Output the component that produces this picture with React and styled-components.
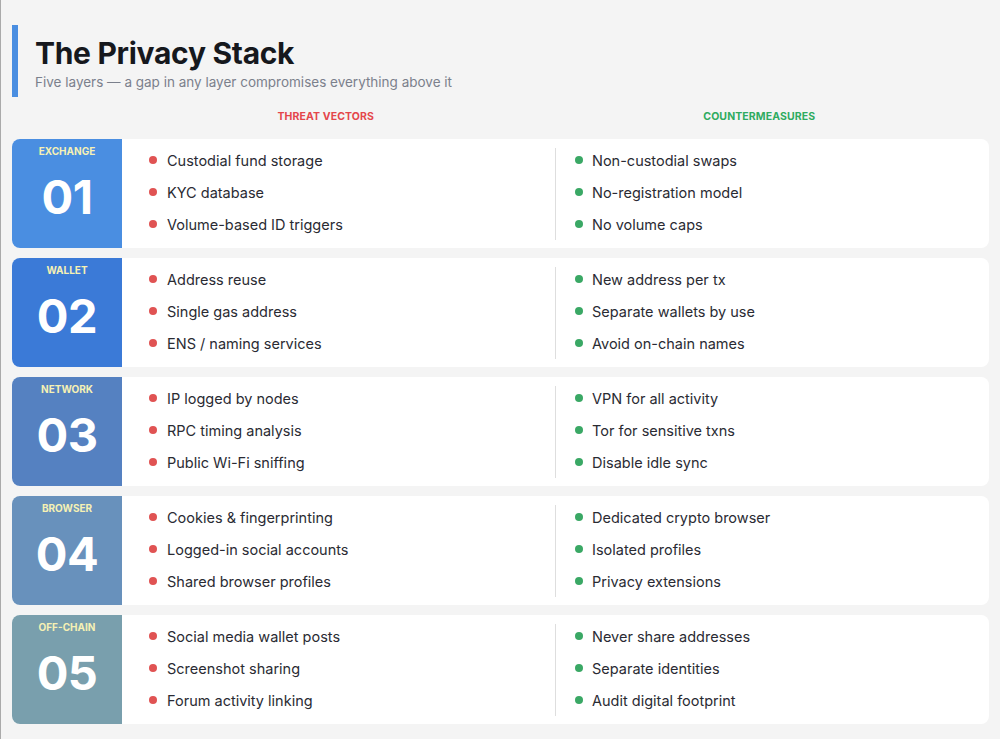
import React from "react";
import styled, { createGlobalStyle } from "styled-components";

const layers = [
  {
    label: "EXCHANGE",
    num: "01",
    color: "#4a8ee1",
    threats: ["Custodial fund storage", "KYC database", "Volume-based ID triggers"],
    counters: ["Non-custodial swaps", "No-registration model", "No volume caps"],
  },
  {
    label: "WALLET",
    num: "02",
    color: "#3b7ad7",
    threats: ["Address reuse", "Single gas address", "ENS / naming services"],
    counters: ["New address per tx", "Separate wallets by use", "Avoid on-chain names"],
  },
  {
    label: "NETWORK",
    num: "03",
    color: "#5581c1",
    threats: ["IP logged by nodes", "RPC timing analysis", "Public Wi-Fi sniffing"],
    counters: ["VPN for all activity", "Tor for sensitive txns", "Disable idle sync"],
  },
  {
    label: "BROWSER",
    num: "04",
    color: "#6891bc",
    threats: ["Cookies & fingerprinting", "Logged-in social accounts", "Shared browser profiles"],
    counters: ["Dedicated crypto browser", "Isolated profiles", "Privacy extensions"],
  },
  {
    label: "OFF-CHAIN",
    num: "05",
    color: "#799fad",
    threats: ["Social media wallet posts", "Screenshot sharing", "Forum activity linking"],
    counters: ["Never share addresses", "Separate identities", "Audit digital footprint"],
  },
];

const GlobalStyle = createGlobalStyle`
  html, body {
    margin: 0;
    background: #f4f4f4;
  }
  body {
    font-family: Inter, "Noto Sans", sans-serif;
  }
`;

const Page = styled.div`
  min-height: 739px;
  box-sizing: border-box;
  padding: 25px 11px 0 11px;
  border-left: 1px solid #aaaaaa;
  background: #f4f4f4;
`;

const Header = styled.header`
  height: 72px;
  box-sizing: border-box;
  border-left: 6px solid #4a8ee1;
  padding: 10px 0 0 17px;
`;

const Title = styled.h1`
  margin: 0;
  font-size: 30px;
  line-height: 36px;
  font-weight: 700;
  color: #16181d;
  letter-spacing: -0.3px;
`;

const Subtitle = styled.p`
  margin: 2px 0 0;
  font-size: 13.5px;
  line-height: 18px;
  color: #7b808c;
`;

const ColumnHeads = styled.div`
  display: grid;
  grid-template-columns: 1fr 1fr;
  margin: 11px 13px 15px 97px;
  height: 16px;
  align-items: center;
`;

const ColumnHead = styled.div`
  text-align: center;
  font-size: 10.5px;
  font-weight: 700;
  letter-spacing: 0.1px;
  color: ${(p) => p.$color};
`;

const Stack = styled.div`
  display: flex;
  flex-direction: column;
  gap: 10px;
`;

const Card = styled.div`
  display: grid;
  grid-template-columns: 110px 1fr 1px 1fr;
  height: 109px;
  background: #ffffff;
  border-radius: 8px;
`;

const Badge = styled.div`
  display: flex;
  flex-direction: column;
  align-items: center;
  padding-top: 6px;
  background: ${(p) => p.$color};
  border-radius: 8px 0 0 8px;
`;

const BadgeLabel = styled.div`
  font-size: 10px;
  line-height: 12px;
  font-weight: 700;
  color: #f6f1b4;
`;

const BadgeNum = styled.div`
  margin-top: 17px;
  font-size: 47px;
  line-height: 46px;
  font-weight: 700;
  color: #ffffff;
  letter-spacing: -0.5px;
`;

const List = styled.ul`
  list-style: none;
  margin: 0;
  padding: 5px 0 0 ${(p) => p.$indent}px;
`;

const Item = styled.li`
  display: flex;
  align-items: center;
  gap: ${(p) => p.$gap}px;
  height: 32px;
  font-size: 14.5px;
  color: #2a2b33;
`;

const Dot = styled.span`
  width: 8px;
  height: 8px;
  border-radius: 50%;
  flex-shrink: 0;
  background: ${(p) => p.$color};
`;

const Divider = styled.div`
  align-self: center;
  height: 92px;
  background: #dedede;
`;

const RED = "#e05353";
const GREEN = "#3aa865";

export default function App() {
  return (
    <>
      <GlobalStyle />
      <Page>
        <Header>
          <Title>The Privacy Stack</Title>
          <Subtitle>Five layers — a gap in any layer compromises everything above it</Subtitle>
        </Header>
        <ColumnHeads>
          <ColumnHead $color="#e4464b">THREAT VECTORS</ColumnHead>
          <ColumnHead $color="#2fab5f">COUNTERMEASURES</ColumnHead>
        </ColumnHeads>
        <Stack>
          {layers.map((layer) => (
            <Card key={layer.num}>
              <Badge $color={layer.color}>
                <BadgeLabel>{layer.label}</BadgeLabel>
                <BadgeNum>{layer.num}</BadgeNum>
              </Badge>
              <List $indent={27}>
                {layer.threats.map((t) => (
                  <Item key={t} $gap={10}>
                    <Dot $color={RED} />
                    {t}
                  </Item>
                ))}
              </List>
              <Divider />
              <List $indent={19}>
                {layer.counters.map((c) => (
                  <Item key={c} $gap={9}>
                    <Dot $color={GREEN} />
                    {c}
                  </Item>
                ))}
              </List>
            </Card>
          ))}
        </Stack>
      </Page>
    </>
  );
}
